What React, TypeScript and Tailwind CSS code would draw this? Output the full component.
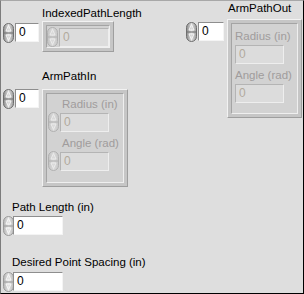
import React from "react";

type SpinProps = { tone?: "dark" | "light" | "off" };

function Spinner({ tone = "dark" }: SpinProps) {
  const c =
    tone === "dark"
      ? { a: "#8c8c8c", b: "#dcdcdc", c: "#9c9c9c", s: "#6e6e6e", l: "#f6f6f6" }
      : tone === "light"
      ? { a: "#b4b4b4", b: "#e4e4e4", c: "#bcbcbc", s: "#9a9a9a", l: "#f8f8f8" }
      : { a: "#c4c4c4", b: "#dadada", c: "#c8c8c8", s: "#b0b0b0", l: "#ececec" };
  const id = "sg-" + tone;
  return (
    <svg width="11" height="20" viewBox="0 0 11 20" className="shrink-0">
      <defs>
        <linearGradient id={id} x1="0" x2="1" y1="0" y2="0">
          <stop offset="0" stopColor={c.a} />
          <stop offset="0.5" stopColor={c.b} />
          <stop offset="1" stopColor={c.c} />
        </linearGradient>
      </defs>
      <rect x="0.5" y="0.5" width="10" height="19" rx="5" fill={`url(#${id})`} stroke={c.s} />
      <line x1="1" y1="10" x2="10" y2="10" stroke={c.s} />
      <path d="M5.5 2.5 L8 8 L3 8 Z" fill="none" stroke={c.l} />
      <path d="M5.5 17.5 L8 12 L3 12 Z" fill="none" stroke={c.l} />
    </svg>
  );
}

function Box({ w, off }: { w: number; off?: boolean }) {
  return (
    <div
      className={
        off
          ? "h-[19px] border border-t-[#b4b4b4] border-l-[#b4b4b4] border-r-[#eeeeee] border-b-[#eeeeee] bg-[#dcdcdc] pl-[3px] text-[12px] leading-[17px] text-[#b2aa9c]"
          : "h-[19px] border border-t-[#8e8e8e] border-l-[#8e8e8e] border-r-[#f4f4f4] border-b-[#f4f4f4] bg-white pl-[3px] text-[12px] leading-[17px] text-black"
      }
      style={{ width: w }}
    >
      0
    </div>
  );
}

function Frame({ children, className }: { children: React.ReactNode; className: string }) {
  return (
    <div
      className={
        "absolute border border-t-[#f2f2f2] border-l-[#f2f2f2] border-r-[#9e9e9e] border-b-[#9e9e9e] bg-[#c6c6c6] p-[3px] " +
        className
      }
    >
      <div className="h-full w-full border border-t-[#a4a4a4] border-l-[#a4a4a4] border-r-[#efefef] border-b-[#efefef] bg-[#d2d2d2]">
        {children}
      </div>
    </div>
  );
}

const label = "absolute text-[11.5px] leading-[14px] text-black whitespace-nowrap";
const offLabel = "text-[11.5px] leading-[14px] text-[#a09c9c] whitespace-nowrap";

export default function App() {
  return (
    <div className="relative h-[294px] w-[304px] overflow-hidden border border-t-[#a8a8a8] border-l-[#7c7c7c] border-r-black border-b-black bg-[#dedede] font-['Liberation_Sans',Arial,sans-serif]">
      {/* IndexedPathLength */}
      <div className={label + " left-[41px] top-[5px]"}>IndexedPathLength</div>
      <div className="absolute left-[2px] top-[22px] flex items-start gap-[1px]">
        <Spinner />
        <Box w={24} />
      </div>
      <Frame className="left-[41px] top-[20px] h-[31px] w-[72px]">
        <div className="flex items-center gap-[1px] pl-[0px] pt-[1px]">
          <Spinner tone="off" />
          <Box w={51} off />
        </div>
      </Frame>

      {/* ArmPathOut */}
      <div className={label + " left-[227px] top-[0px]"}>ArmPathOut</div>
      <div className="absolute left-[185px] top-[21px] flex items-start gap-[1px]">
        <Spinner />
        <Box w={26} />
      </div>
      <Frame className="left-[226px] top-[18px] h-[99px] w-[75px]">
        <div className="flex flex-col pl-[3px] pt-[5px]">
          <div className={offLabel}>Radius (in)</div>
          <div className="mt-[2px]">
            <Box w={49} off />
          </div>
          <div className={offLabel + " mt-[4px]"}>Angle (rad)</div>
          <div className="mt-[2px]">
            <Box w={49} off />
          </div>
        </div>
      </Frame>

      {/* ArmPathIn */}
      <div className={label + " left-[41px] top-[68px]"}>ArmPathIn</div>
      <div className="absolute left-[2px] top-[88px] flex items-start gap-[1px]">
        <Spinner />
        <Box w={24} />
      </div>
      <Frame className="left-[41px] top-[88px] h-[98px] w-[86px]">
        <div className="flex flex-col pl-[1px] pt-[3px]">
          <div className={offLabel + " ml-[14px]"}>Radius (in)</div>
          <div className="mt-[1px] flex items-center gap-[1px]">
            <Spinner tone="off" />
            <Box w={49} off />
          </div>
          <div className={offLabel + " ml-[14px] mt-[4px]"}>Angle (rad)</div>
          <div className="mt-[1px] flex items-center gap-[1px]">
            <Spinner tone="off" />
            <Box w={49} off />
          </div>
        </div>
      </Frame>

      {/* Path Length */}
      <div className="absolute left-[2px] top-[199px] flex flex-col">
        <div className="ml-[9px] text-[11.5px] leading-[14px] text-black whitespace-nowrap">Path Length (in)</div>
        <div className="mt-[2px] flex items-start">
          <div className="w-[10px] overflow-hidden">
            <Spinner tone="light" />
          </div>
          <Box w={50} />
        </div>
      </div>

      {/* Desired Point Spacing */}
      <div className="absolute left-[2px] top-[254px] flex flex-col">
        <div className="ml-[9px] text-[11.5px] leading-[14px] text-black whitespace-nowrap">Desired Point Spacing (in)</div>
        <div className="mt-[3px] flex items-start">
          <div className="w-[10px] overflow-hidden">
            <Spinner tone="light" />
          </div>
          <Box w={50} />
        </div>
      </div>
    </div>
  );
}
